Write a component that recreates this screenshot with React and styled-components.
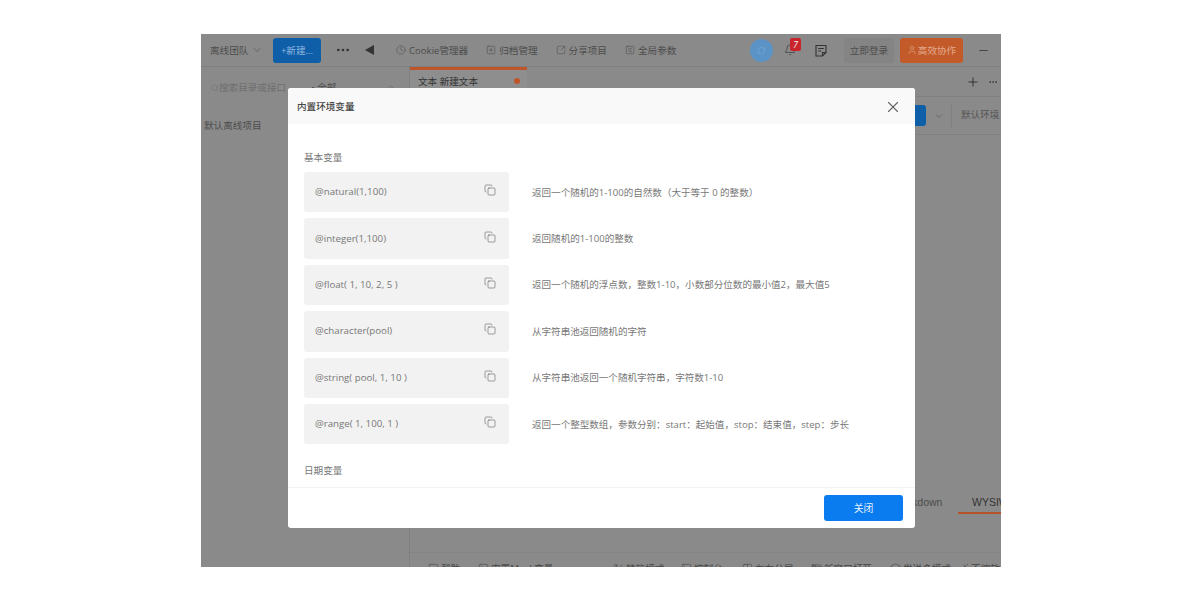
import React from "react";
import styled, { createGlobalStyle } from "styled-components";
import {
  ChevronDown, Clock, SquarePlus, SquareArrowOutUpRight, SquareChartGantt, Bell,
  User, Minus, Plus, X, Copy, Ellipsis, Search, RefreshCw, ChevronUp, SquareCode, SquareTerminal, Columns2, AppWindow, Scissors, Layers, Minimize2,
} from "lucide-react";

const Global = createGlobalStyle`
  html, body { margin: 0; background: #fff; }
  body { font-family: "Open Sans", "Noto Sans CJK SC", sans-serif; }
  * { box-sizing: border-box; }
`;

const Page = styled.div`
  width: 1200px;
  height: 600px;
  padding: 34px 0 0 201px;
  overflow: hidden;
`;
const Frame = styled.div`
  position: relative;
  width: 800px;
  height: 533px;
  background: #8a8a8a;
  color: #4c4c4c;
  font-size: 9.6px;
  overflow: hidden;
`;
const TopBar = styled.div`
  height: 33px;
  display: flex;
  align-items: center;
  padding-left: 9px;
  border-bottom: 1px solid #7f7f7f;
`;
const Team = styled.div`
  width: 63px;
  display: flex;
  align-items: center;
  gap: 3px;
`;
const NewBtn = styled.div`
  width: 48px;
  height: 25px;
  background: #0f5ea8;
  color: #8fb9e0;
  border-radius: 3px;
  display: flex;
  align-items: center;
  justify-content: center;
`;
const More = styled.div`
  width: 30px;
  margin-left: 14px;
  display: flex;
  color: #333;
`;
const Triangle = styled.div`
  width: 0;
  height: 0;
  border-style: solid;
  border-width: 5px 9px 5px 0;
  border-color: transparent #333 transparent transparent;
  margin-right: 22px;
`;
const TopLink = styled.div`
  display: flex;
  align-items: center;
  gap: 3px;
  margin-right: ${p => p.$gap}px;
  white-space: nowrap;
`;
const Push = styled.div`
  flex: 1;
`;
const Avatar = styled.div`
  width: 23px;
  height: 23px;
  border-radius: 50%;
  background: #5b93c6;
  color: #7fb0da;
  display: flex;
  align-items: center;
  justify-content: center;
  margin-right: 11px;
`;
const BellWrap = styled.div`
  position: relative;
  display: flex;
  margin-right: 19px;
  color: #333;
`;
const Badge = styled.span`
  position: absolute;
  top: -6px;
  left: 6px;
  width: 11px;
  height: 13px;
  border-radius: 2px;
  background: #c9252b;
  color: #eee;
  font-size: 9px;
  font-style: italic;
  text-align: center;
  line-height: 13px;
`;
const Note = styled.svg`
  width: 12px;
  height: 13px;
  margin-right: 17px;
  fill: none;
  stroke: #333;
  stroke-width: 1.1;
`;
const Login = styled.div`
  width: 50px;
  height: 25px;
  border-radius: 3px;
  background: #848484;
  display: flex;
  align-items: center;
  justify-content: center;
  margin-right: 6px;
`;
const Collab = styled.div`
  width: 63px;
  height: 25px;
  border-radius: 3px;
  background: #c25a2a;
  color: #e3a98c;
  display: flex;
  align-items: center;
  justify-content: center;
  gap: 1px;
  margin-right: 14px;
`;
const MinBtn = styled.div`
  width: 24px;
  display: flex;
  color: #333;
`;
const Body = styled.div`
  display: flex;
  height: 500px;
`;
const Side = styled.aside`
  width: 209px;
  flex: none;
  border-right: 1px solid #808080;
`;
const SideSearch = styled.div`
  height: 40px;
  padding: 13px 0 0 10px;
  display: flex;
  align-items: flex-start;
  color: #6e6e6e;
  gap: 0;
`;
const Scope = styled.span`
  color: #4c4c4c;
  margin-left: 25px;
`;
const SideItem = styled.div`
  padding: 11px 0 0 3px;
  color: #4c4c4c;
`;
const Main = styled.main`
  flex: 1;
  display: flex;
  flex-direction: column;
  min-width: 0;
`;
const Tabs = styled.div`
  height: 30px;
  display: flex;
  align-items: flex-start;
  border-bottom: 1px solid #808080;
`;
const Tab = styled.div`
  width: 117px;
  height: 30px;
  border-top: 3px solid #c0552a;
  background: #8e8e8e;
  padding: 4px 7px 0 8px;
  display: flex;
  justify-content: space-between;
  color: #333;
`;
const Dot = styled.span`
  width: 6px;
  height: 6px;
  margin-top: 4px;
  border-radius: 50%;
  background: #c0552a;
`;
const TabTools = styled.div`
  margin-left: auto;
  display: flex;
  align-items: center;
  height: 30px;
  gap: 8px;
  padding-right: 3px;
  color: #222;
`;
const UrlRow = styled.div`
  height: 38px;
  display: flex;
  align-items: center;
  justify-content: flex-end;
  border-bottom: 1px solid #808080;
  color: #555;
  white-space: nowrap;
`;
const SendBtn = styled.div`
  width: 20px;
  height: 21px;
  background: #0f5ea8;
  border-radius: 0 3px 3px 0;
  margin-right: 7px;
`;
const Env = styled.div`
  width: 50px;
  height: 24px;
  margin-left: 6px;
  padding-left: 9px;
  border-left: 1px solid #808080;
  line-height: 21px;
  overflow: hidden;
`;
const EditorTabs = styled.div`
  margin-top: auto;
  height: 26px;
  display: flex;
  justify-content: flex-end;
  align-items: flex-start;
  gap: 14px;
  padding-top: 2px;
  white-space: nowrap;
  color: #444;
`;
const EditorTab = styled.div`
  width: ${p => p.$w}px;
  height: 24px;
  padding: 6px 0 0 ${p => p.$pad}px;
  overflow: hidden;
  font-family: "Liberation Sans", sans-serif;
  font-size: 10.5px;
  border-bottom: ${p => (p.$on ? "2px solid #b4532a" : "none")};
  color: ${p => (p.$on ? "#333" : "#4c4c4c")};
`;
const Pane = styled.div`
  height: 39px;
  border-bottom: 1px solid #848484;
`;
const Foot = styled.div`
  height: 14px;
  display: flex;
  padding-top: 8px;
  padding-left: 18px;
  color: #444;
  white-space: nowrap;
`;
const FootItem = styled.div`
  display: flex;
  align-items: center;
  gap: 2px;
  height: 14px;
  width: ${p => p.$w}px;
  flex: none;
`;
const Modal = styled.div`
  position: absolute;
  left: 87px;
  top: 54px;
  width: 627px;
  height: 440px;
  background: #fff;
  border-radius: 3px;
  display: flex;
  flex-direction: column;
  overflow: hidden;
`;
const ModalHead = styled.header`
  height: 36px;
  flex: none;
  background: #f9f9f9;
  display: flex;
  align-items: center;
  justify-content: space-between;
  padding: 0 13px 0 9px;
  font-size: 9.6px;
  font-weight: 500;
  color: #444;
`;
const CloseBtn = styled.div`
  display: flex;
  margin-top: 2px;
  color: #666;
`;
const ModalBody = styled.div`
  flex: 1;
  overflow: hidden;
  padding: 27px 16px 0;
  min-height: 0;
`;
const Section = styled.div`
  font-size: 9.6px;
  line-height: 14px;
  color: #777;
  margin-top: ${p => p.$mt}px;
  margin-bottom: 7px;
`;
const Row = styled.div`
  display: flex;
  align-items: center;
  height: 40.4px;
  margin-bottom: 6px;
`;
const Code = styled.div`
  width: 205px;
  height: 100%;
  flex: none;
  background: #f2f2f2;
  border-radius: 3px;
  padding: 0 13px 1px 11px;
  display: flex;
  align-items: center;
  justify-content: space-between;
  font-size: 9.7px;
  color: #777;
`;
const CopyIcon = styled.span`
  display: flex;
  margin-top: -3px;
  color: #555;
`;
const Desc = styled.div`
  margin-left: 23px;
  padding-bottom: 1px;
  font-size: 9.55px;
  color: #777;
  white-space: nowrap;
`;
const ModalFoot = styled.footer`
  height: 41px;
  flex: none;
  border-top: 1px solid #f2f2f2;
  display: flex;
  align-items: center;
  justify-content: flex-end;
  padding: 0 12px 0 0;
`;
const Close = styled.div`
  width: 79px;
  height: 26px;
  background: #0a7cf0;
  border-radius: 3px;
  color: #e8f2fd;
  font-size: 9.8px;
  display: flex;
  align-items: center;
  justify-content: center;
`;

const vars = [
  ["@natural(1,100)", "返回一个随机的1-100的自然数（大于等于 0 的整数）"],
  ["@integer(1,100)", "返回随机的1-100的整数"],
  ["@float( 1, 10, 2, 5 )", "返回一个随机的浮点数，整数1-10，小数部分位数的最小值2，最大值5"],
  ["@character(pool)", "从字符串池返回随机的字符"],
  ["@string( pool, 1, 10 )", "从字符串池返回一个随机字符串，字符数1-10"],
  ["@range( 1, 100, 1 )", "返回一个整型数组，参数分别：start：起始值，stop：结束值，step：步长"],
];

const foot = [
  [SquareCode, "帮助", 50],
  [SquareTerminal, "内置Mock变量", 135],
  [Scissors, "精简模式", 68],
  [SquareTerminal, "控制台", 61],
  [Columns2, "左右分屏", 69],
  [AppWindow, "新窗口打开", 79],
  [Layers, "发送多模式", 68],
  [Minimize2, "不缩放", 50],
];

export default function App() {
  return (
    <Page>
      <Global />
      <Frame>
        <TopBar>
          <Team>离线团队<ChevronDown size={12} strokeWidth={1.2} /></Team>
          <NewBtn>+新建...</NewBtn>
          <More><Ellipsis size={16} strokeWidth={2} /></More>
          <Triangle />
          <TopLink $gap={18}><Clock size={10} strokeWidth={1.3} />Cookie管理器</TopLink>
          <TopLink $gap={18}><SquarePlus size={10} strokeWidth={1.3} />归档管理</TopLink>
          <TopLink $gap={18}><SquareArrowOutUpRight size={10} strokeWidth={1.3} />分享项目</TopLink>
          <TopLink $gap={0}><SquareChartGantt size={10} strokeWidth={1.3} />全局参数</TopLink>
          <Push />
          <Avatar><RefreshCw size={9} strokeWidth={1.3} /></Avatar>
          <BellWrap><Bell size={12} strokeWidth={1.3} /><Badge>7</Badge></BellWrap>
          <Note viewBox="0 0 12 13">
            <path d="M1 1.5h10v7l-3.5 3.5H1z" />
            <path d="M7.5 12V8.5H11M3.2 4.5h5.6M3.2 7h3" />
          </Note>
          <Login>立即登录</Login>
          <Collab><User size={10} strokeWidth={1.5} />高效协作</Collab>
          <MinBtn><Minus size={13} strokeWidth={1.5} /></MinBtn>
        </TopBar>
        <Body>
          <Side>
            <SideSearch>
              <Search size={8} strokeWidth={1.5} style={{ marginTop: 4 }} />搜索目录或接口
              <Scope>• 全部</Scope>
              <Push />
              <ChevronUp size={10} style={{ marginRight: 13, marginTop: 2 }} />
            </SideSearch>
            <SideItem>默认离线项目</SideItem>
          </Side>
          <Main>
            <Tabs>
              <Tab>文本 新建文本<Dot /></Tab>
              <TabTools><Plus size={14} strokeWidth={1.4} /><Ellipsis size={10} strokeWidth={1.4} /></TabTools>
            </Tabs>
            <UrlRow>
              <SendBtn />
              <ChevronDown size={12} strokeWidth={1.2} />
              <Env>默认环境 ▾</Env>
            </UrlRow>
            <EditorTabs>
              <EditorTab $w={50} $pad={0}>Markdown</EditorTab>
              <EditorTab $w={43} $pad={14} $on>WYSIWYG</EditorTab>
            </EditorTabs>
            <Pane />
            <Foot>
              {foot.map(([Icon, label, w]) => (
                <FootItem key={label} $w={w}><Icon size={11} strokeWidth={1.2} />{label}</FootItem>
              ))}
            </Foot>
          </Main>
        </Body>
        <Modal>
          <ModalHead>内置环境变量<CloseBtn><X size={18} strokeWidth={1.5} /></CloseBtn></ModalHead>
          <ModalBody>
            <Section $mt={0}>基本变量</Section>
            {vars.map(([code, desc]) => (
              <Row key={code}>
                <Code>{code}<CopyIcon><Copy size={12} strokeWidth={1.1} /></CopyIcon></Code>
                <Desc>{desc}</Desc>
              </Row>
            ))}
            <Section $mt={20}>日期变量</Section>
          </ModalBody>
          <ModalFoot><Close>关闭</Close></ModalFoot>
        </Modal>
      </Frame>
    </Page>
  );
}
